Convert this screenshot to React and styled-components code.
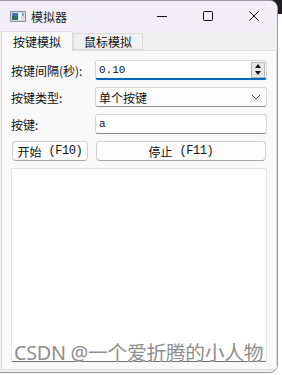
import React from "react";
import styled, { createGlobalStyle } from "styled-components";

const GlobalStyle = createGlobalStyle`
  html, body {
    margin: 0;
    padding: 0;
    background: #ffffff;
  }
  body {
    font-family: "Noto Sans CJK SC", "Noto Sans", sans-serif;
  }
`;

const CJK = `"Noto Sans CJK SC", "Noto Sans", sans-serif`;
const MONO = `"Liberation Mono", "Noto Sans CJK SC", monospace`;

const Screen = styled.div`
  position: relative;
  width: 282px;
  height: 375px;
  overflow: hidden;
  background: #ffffff;

  &::before {
    content: "";
    position: absolute;
    top: 0;
    right: 0;
    width: 14px;
    height: 14px;
    background: #1e1e22;
  }
`;

const Window = styled.div`
  position: relative;
  width: 279px;
  height: 373px;
  margin-left: -1px;
  box-sizing: border-box;
  border: 1px solid #9a9a9a;
  border-radius: 0 8px 8px 0;
  background: #f0f0f0;
  display: flex;
  flex-direction: column;
  overflow: hidden;
`;

const TitleBar = styled.div`
  height: 30px;
  flex: none;
  display: flex;
  align-items: center;
  background: #f2eef6;
  padding-left: 10px;
`;

const AppIcon = styled.svg`
  width: 16px;
  height: 11px;
  flex: none;
`;

const Title = styled.div`
  font-family: ${CJK};
  font-size: 12px;
  color: #1a1a1a;
  margin-left: 5px;
  flex: 1;
`;

const Control = styled.div`
  width: 46px;
  height: 30px;
  display: flex;
  align-items: center;
  justify-content: center;
  flex: none;
`;

const TabBar = styled.div`
  height: 19px;
  flex: none;
  display: flex;
  align-items: flex-end;
  padding-left: 1px;
`;

const Tab = styled.div`
  box-sizing: border-box;
  height: ${(p) => (p.$active ? "20px" : "17px")};
  margin-bottom: ${(p) => (p.$active ? "-1px" : "0")};
  padding: 0 ${(p) => (p.$active ? "11px" : "10px")};
  display: flex;
  align-items: center;
  font-family: ${CJK};
  font-size: 12px;
  color: #111;
  background: ${(p) => (p.$active ? "#f9f9f9" : "#f0f0f0")};
  border: 1px solid #dcdcdc;
  border-bottom: ${(p) => (p.$active ? "none" : "1px solid #dcdcdc")};
  position: relative;
  z-index: ${(p) => (p.$active ? 1 : 0)};
`;

const Pane = styled.div`
  flex: 1;
  margin: 0 0 2px 1px;
  width: 276px;
  box-sizing: border-box;
  background: #f9f9f9;
  border: 1px solid #dcdcdc;
  padding: 9px 9px 6px 9px;
  display: flex;
  flex-direction: column;
  gap: 7px;
`;

const Row = styled.div`
  height: 20px;
  display: flex;
  align-items: center;
`;

const Label = styled.div`
  width: 84px;
  flex: none;
  font-family: ${CJK};
  font-size: 12px;
  color: #111;
`;

const Field = styled.div`
  flex: 1;
  height: 20px;
  box-sizing: border-box;
  background: ${(p) => (p.$soft ? "#fdfdfd" : "#ffffff")};
  border: 1px solid #d6d6d6;
  border-bottom: ${(p) =>
    p.$focus ? "2px solid #0067c0" : "1px solid #8c8c8c"};
  border-radius: 3px;
  display: flex;
  align-items: center;
  padding-left: 3px;
  font-family: ${(p) => (p.$mono ? MONO : CJK)};
  font-size: ${(p) => (p.$mono ? "11px" : "12px")};
  color: #111;
`;

const FieldText = styled.div`
  flex: 1;
`;

const Spin = styled.div`
  width: 14px;
  height: 16px;
  margin-right: 1px;
  box-sizing: border-box;
  border: 1px solid #b8b8b8;
  background: #e6e6e6;
  display: flex;
  flex-direction: column;
  align-items: center;
  justify-content: space-around;
`;

const Arrow = styled.div`
  width: 0;
  height: 0;
  border-left: 3px solid transparent;
  border-right: 3px solid transparent;
  ${(p) =>
    p.$up ? "border-bottom: 4px solid #111;" : "border-top: 4px solid #111;"}
`;

const Chevron = styled.svg`
  width: 10px;
  height: 6px;
  margin-right: 5px;
`;

const ButtonRow = styled.div`
  height: 20px;
  display: flex;
  gap: 8px;
  padding: 0 1px;
`;

const Button = styled.div`
  box-sizing: border-box;
  height: 20px;
  width: ${(p) => (p.$wide ? "auto" : "76px")};
  flex: ${(p) => (p.$wide ? 1 : "none")};
  background: #fdfdfd;
  border: 1px solid #d0d0d0;
  border-bottom: 1px solid #a8a8a8;
  border-radius: 4px;
  display: flex;
  align-items: center;
  justify-content: center;
  font-family: ${MONO};
  font-size: 12px;
  letter-spacing: -0.4px;
  color: #111;
  white-space: pre;
`;

const Cn = styled.span`
  font-family: ${CJK};
  font-size: 12px;
  letter-spacing: 0;
`;

const Log = styled.div`
  height: 194px;
  box-sizing: border-box;
  background: #ffffff;
  border: 1px solid #e2e2e2;
  border-bottom: 1px solid #6e6e6e;
  border-radius: 2px;
`;

const Watermark = styled.div`
  position: absolute;
  left: 14px;
  top: 340px;
  font-family: "Noto Sans", "Noto Sans CJK SC", sans-serif;
  font-size: 19.8px;
  line-height: 26px;
  color: #8e8e8e;
  letter-spacing: -0.3px;
  text-shadow: 0 0 1px #fff, 0 0 1px #fff;
  white-space: nowrap;
`;

export default function App() {
  return (
    <>
      <GlobalStyle />
      <Screen>
        <Window>
          <TitleBar>
            <AppIcon viewBox="0 0 16 11">
              <rect x="0.5" y="0.5" width="15" height="10" fill="#d8dbe0" stroke="#8b9099" />
              <rect x="2" y="2" width="6" height="7" fill="#2f6f6a" />
              <rect x="2" y="2" width="6" height="3" fill="#3e78b8" />
              <rect x="9" y="2" width="2" height="7" fill="#ffffff" />
              <rect x="12" y="2" width="2" height="3" fill="#7fb0d8" />
            </AppIcon>
            <Title>模拟器</Title>
            <Control>
              <svg width="12" height="12" viewBox="0 0 12 12">
                <path d="M1 6.5h10" stroke="#111" strokeWidth="1" />
              </svg>
            </Control>
            <Control>
              <svg width="12" height="12" viewBox="0 0 12 12">
                <rect x="1.5" y="1.5" width="9" height="9" rx="1" fill="none" stroke="#111" strokeWidth="1" />
              </svg>
            </Control>
            <Control>
              <svg width="12" height="12" viewBox="0 0 12 12">
                <path d="M1.5 1.5l9 9M10.5 1.5l-9 9" stroke="#111" strokeWidth="1" />
              </svg>
            </Control>
          </TitleBar>
          <TabBar>
            <Tab $active>按键模拟</Tab>
            <Tab>鼠标模拟</Tab>
          </TabBar>
          <Pane>
            <Row>
              <Label>按键间隔(秒):</Label>
              <Field $focus $mono>
                <FieldText>0.10</FieldText>
                <Spin>
                  <Arrow $up />
                  <Arrow />
                </Spin>
              </Field>
            </Row>
            <Row>
              <Label>按键类型:</Label>
              <Field $soft>
                <FieldText>单个按键</FieldText>
                <Chevron viewBox="0 0 10 6">
                  <path d="M1 1l4 4 4-4" fill="none" stroke="#444" strokeWidth="1" />
                </Chevron>
              </Field>
            </Row>
            <Row>
              <Label>按键:</Label>
              <Field $mono>
                <FieldText>a</FieldText>
              </Field>
            </Row>
            <ButtonRow>
              <Button>
                <Cn>开始</Cn> (F10)
              </Button>
              <Button $wide>
                <Cn>停止</Cn> (F11)
              </Button>
            </ButtonRow>
            <Log />
          </Pane>
        </Window>
        <Watermark>CSDN @一个爱折腾的小人物</Watermark>
      </Screen>
    </>
  );
}
